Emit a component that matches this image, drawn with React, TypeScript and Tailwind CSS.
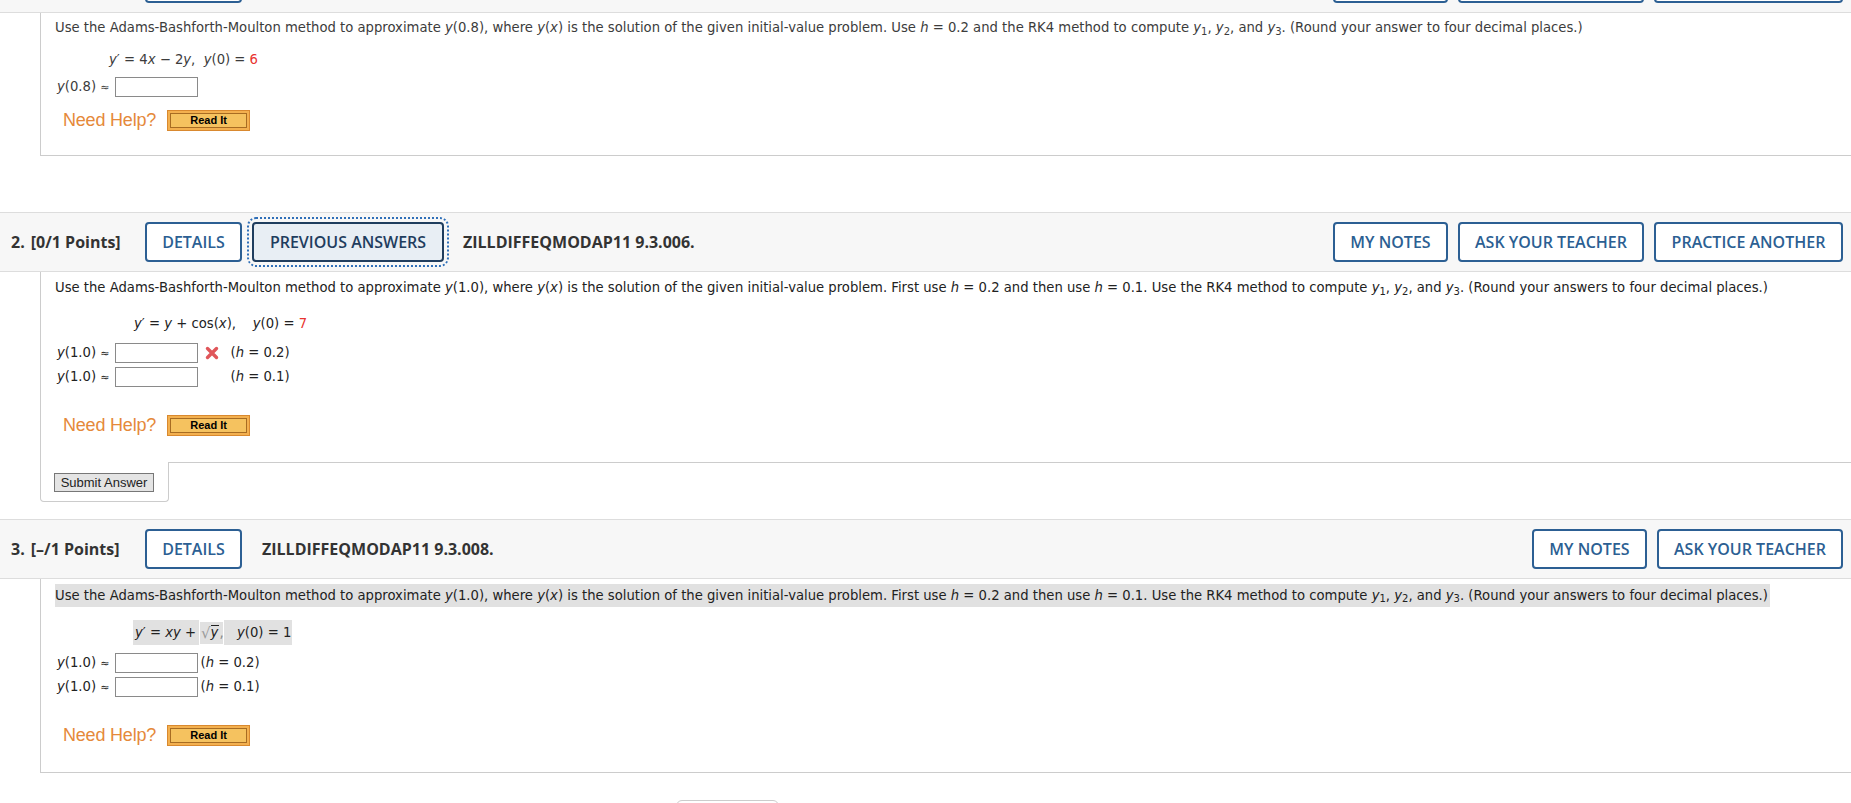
import React from 'react'

const body = "font-['DejaVu_Sans',Verdana,sans-serif] text-[13.2px] leading-[18px]"
const arial = "font-['Liberation_Sans',Arial,sans-serif]"

function V({ children }: { children: React.ReactNode }) {
  return <span className="italic">{children}</span>
}

function Sub({ children }: { children: React.ReactNode }) {
  return <sub className="text-[10px]">{children}</sub>
}

function HeadButton({ label, cls, active }: { label: string; cls: string; active?: boolean }) {
  if (active) {
    return (
      <div className="outline-2 outline-dotted outline-[#2f6fb8] outline-offset-[3px] rounded-[4px]">
        <div className={`h-[40px] ${cls} border-2 border-[#1f3d5e] rounded-[4px] bg-[#e8eef4] flex items-center justify-center text-[16px] font-semibold text-[#1f3d5e]`}>
          {label}
        </div>
      </div>
    )
  }
  return (
    <div className={`h-[40px] ${cls} border-2 border-[#2c5f93] rounded-[4px] bg-white flex items-center justify-center text-[16px] font-semibold text-[#2c5f93]`}>
      {label}
    </div>
  )
}

function Header({ num, points, code, prev, practice }: { num: string; points: string; code: string; prev?: boolean; practice?: boolean }) {
  return (
    <div className="h-[60px] bg-[#f7f7f7] border-y border-[#dddddd] flex items-center font-['Open_Sans',sans-serif] text-[#333333]">
      <div className="w-[145px] pl-[11px] shrink-0 text-[16px] font-bold">
        {num}<span className="ml-[6px]">{points}</span>
      </div>
      <HeadButton label="DETAILS" cls="w-[97px]" />
      {prev && (
        <div className="ml-[10px]">
          <HeadButton label="PREVIOUS ANSWERS" cls="w-[192px]" active />
        </div>
      )}
      <div className={`${prev ? 'ml-[19px]' : 'ml-[20px]'} text-[16px] font-bold`}>{code}</div>
      <div className="ml-auto flex items-center gap-[10px] pr-[8px]">
        <HeadButton label="MY NOTES" cls="w-[115px]" />
        <HeadButton label="ASK YOUR TEACHER" cls="w-[186px]" />
        {practice && <HeadButton label="PRACTICE ANOTHER" cls="w-[189px]" />}
      </div>
    </div>
  )
}

function Answer() {
  return <div className="w-[83px] h-[20px] border border-[#8a8a8a] bg-white shrink-0" />
}

function Label({ v }: { v: string }) {
  return (
    <span className="mr-[5px] pl-[2px] whitespace-pre">
      <V>y</V>({v}) <span className="text-[11px]">≈</span>
    </span>
  )
}

function NeedHelp() {
  return (
    <div className="flex items-center h-[22px] pl-[8px]">
      <span className={`${arial} text-[18px] text-[#e5893a] tracking-[-0.2px]`}>Need Help?</span>
      <div className="ml-[11px] w-[83px] h-[21px] border border-[#d9892f] bg-[#f3b04f] p-[2px]">
        <div className={`w-full h-full border border-[#a86c22] bg-[#f5c25f] flex items-center justify-center ${arial} text-[11px] font-bold text-black`}>
          Read It
        </div>
      </div>
    </div>
  )
}

function RedX() {
  return (
    <svg width="14" height="14" viewBox="0 0 14 14" className="shrink-0">
      <path d="M2.5 2.5 L11.5 11.5 M11.5 2.5 L2.5 11.5" stroke="#e0565a" strokeWidth="3.4" strokeLinecap="round" />
    </svg>
  )
}

export default function App() {
  return (
    <div className="w-[1851px] h-[803px] overflow-hidden bg-white">
      <div className="-mt-[47px]">
        {/* question 1 */}
        <Header num="1." points="[–/1 Points]" code="ZILLDIFFEQMODAP11 9.3.004." practice />
        <div className={`ml-[40px] border-l border-b border-[#cccccc] pl-[14px] pt-[6px] pb-[24px] ${body} text-[#3c3c3c]`}>
          <div className="h-[18px]">
            Use the Adams-Bashforth-Moulton method to approximate <V>y</V>(0.8), where <V>y</V>(<V>x</V>) is the solution of the given initial-value problem. Use <V>h</V> = 0.2 and the RK4 method to compute <V>y</V><Sub>1</Sub>, <V>y</V><Sub>2</Sub>, and <V>y</V><Sub>3</Sub>. (Round your answer to four decimal places.)
          </div>
          <div className="mt-[14px] h-[18px] pl-[54px] whitespace-pre">
            <V>y</V>′ = 4<V>x</V> − 2<V>y</V>,  <V>y</V>(0) = <span className="text-[#e8332f]">6</span>
          </div>
          <div className="mt-[8px] h-[20px] flex items-center">
            <Label v="0.8" />
            <Answer />
          </div>
          <div className="mt-[12px]">
            <NeedHelp />
          </div>
        </div>

        <div className="h-[56px]" />

        {/* question 2 */}
        <Header num="2." points="[0/1 Points]" code="ZILLDIFFEQMODAP11 9.3.006." prev practice />
        <div className={`ml-[40px] border-l border-[#cccccc] pl-[14px] pt-[7px] pb-[26px] ${body} text-[#222222]`}>
          <div className="h-[18px]">
            Use the Adams-Bashforth-Moulton method to approximate <V>y</V>(1.0), where <V>y</V>(<V>x</V>) is the solution of the given initial-value problem. First use <V>h</V> = 0.2 and then use <V>h</V> = 0.1. Use the RK4 method to compute <V>y</V><Sub>1</Sub>, <V>y</V><Sub>2</Sub>, and <V>y</V><Sub>3</Sub>. (Round your answers to four decimal places.)
          </div>
          <div className="mt-[18px] h-[18px] pl-[79px] whitespace-pre">
            <V>y</V>′ = <V>y</V> + cos(<V>x</V>),    <V>y</V>(0) = <span className="text-[#e8332f]">7</span>
          </div>
          <div className="mt-[10px] h-[20px] flex items-center">
            <Label v="1.0" />
            <Answer />
            <div className="ml-[7px]"><RedX /></div>
            <span className="ml-[12px] whitespace-pre">(<V>h</V> = 0.2)</span>
          </div>
          <div className="mt-[4px] h-[20px] flex items-center">
            <Label v="1.0" />
            <Answer />
            <span className="ml-[33px] whitespace-pre">(<V>h</V> = 0.1)</span>
          </div>
          <div className="mt-[27px]">
            <NeedHelp />
          </div>
        </div>
        <div className="flex ml-[40px]">
          <div className="w-[129px] h-[40px] border-l border-r border-b border-[#cccccc] rounded-b-[4px] pt-[11px] pl-[13px]">
            <div className={`w-[100px] h-[19px] border border-[#777777] bg-[#e4e4e4] flex items-center justify-center ${arial} text-[13px] text-[#222222]`}>
              Submit Answer
            </div>
          </div>
          <div className="flex-1 border-t border-[#cccccc]" />
        </div>

        <div className="h-[17px]" />

        {/* question 3 */}
        <Header num="3." points="[–/1 Points]" code="ZILLDIFFEQMODAP11 9.3.008." />
        <div className={`ml-[40px] border-l border-b border-[#cccccc] pl-[14px] pt-[5px] pb-[26px] ${body} text-[#222222]`}>
          <div className="h-[23px] flex items-center">
            <span className="bg-[#e1e1e1] h-[23px] flex items-center pr-[2px]">
              <span>
                Use the Adams-Bashforth-Moulton method to approximate <V>y</V>(1.0), where <V>y</V>(<V>x</V>) is the solution of the given initial-value problem. First use <V>h</V> = 0.2 and then use <V>h</V> = 0.1. Use the RK4 method to compute <V>y</V><Sub>1</Sub>, <V>y</V><Sub>2</Sub>, and <V>y</V><Sub>3</Sub>. (Round your answers to four decimal places.)
              </span>
            </span>
          </div>
          <div className="mt-[13px] h-[25px] pl-[78px] flex items-center">
            <span className="bg-[#e1e1e1] w-[66px] h-[25px] flex items-center pl-[2px] whitespace-pre">
              <V>y</V>′ = <V>xy</V> +
            </span>
            <span className="bg-[#e1e1e1] w-[23px] h-[22px] flex items-center ml-[1px] pl-[1px]">
              <span className="text-[#9a9a9a] text-[15px] leading-[16px]">√</span>
              <span className="border-t border-[#222222] leading-[14px] pr-[1px]"><V>y</V></span>
              <span className="text-[#888888]">,</span>
            </span>
            <span className="bg-[#e1e1e1] w-[68px] h-[25px] flex items-center ml-[1px] pl-[13px] whitespace-pre">
              <V>y</V>(0) = 1
            </span>
          </div>
          <div className="mt-[8px] h-[20px] flex items-center">
            <Label v="1.0" />
            <Answer />
            <span className="ml-[3px] whitespace-pre">(<V>h</V> = 0.2)</span>
          </div>
          <div className="mt-[4px] h-[20px] flex items-center">
            <Label v="1.0" />
            <Answer />
            <span className="ml-[3px] whitespace-pre">(<V>h</V> = 0.1)</span>
          </div>
          <div className="mt-[27px]">
            <NeedHelp />
          </div>
        </div>

        <div className="mt-[27px] ml-[676px] w-[103px] h-[40px] border border-[#cccccc] rounded-[6px]" />
      </div>
    </div>
  )
}
